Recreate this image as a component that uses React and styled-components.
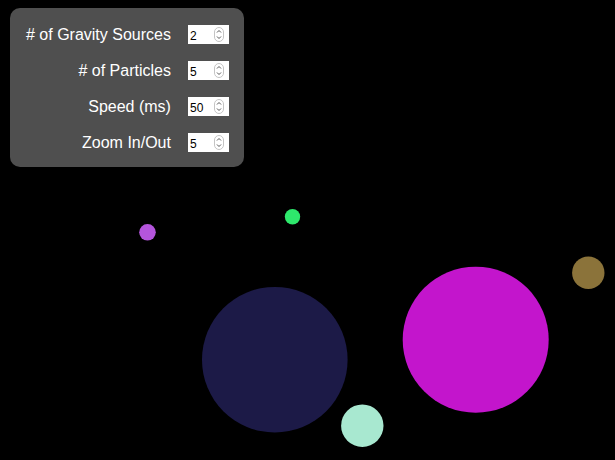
import React, { useState } from 'react';
import styled, { createGlobalStyle } from 'styled-components';

const GlobalStyle = createGlobalStyle`
  html, body {
    margin: 0;
    padding: 0;
    background: #000;
    overflow: hidden;
  }
`;

// the simulation area, black canvas filling the window
const Stage = styled.div`
  position: relative;
  width: 615px;
  height: 460px;
  background: #000;
  font-family: 'Liberation Sans', Arial, Helvetica, sans-serif;
`;

const Canvas = styled.svg`
  display: block;
  width: 100%;
  height: 100%;
`;

// control panel floats over the canvas
const Panel = styled.div`
  position: absolute;
  top: 8px;
  left: 10px;
  display: grid;
  grid-template-columns: auto 41px;
  column-gap: 17px;
  row-gap: 17px;
  align-items: center;
  padding: 17px 15px 15px 16px;
  background: #4f4f4f;
  border-radius: 10px;
`;

const Label = styled.label`
  color: #fff;
  font-size: 16px;
  text-align: right;
  white-space: nowrap;
  line-height: 19px;
`;

const NumberBox = styled.div`
  position: relative;
  width: 41px;
  height: 19px;
  background: #fff;
`;

const Input = styled.input`
  width: 100%;
  height: 100%;
  box-sizing: border-box;
  border: none;
  outline: none;
  padding: 2px 0 0 2px;
  font-family: 'Liberation Sans', Arial, sans-serif;
  font-size: 12px;
  color: #000;
  background: transparent;
  -moz-appearance: textfield;
  &::-webkit-inner-spin-button,
  &::-webkit-outer-spin-button {
    -webkit-appearance: none;
    margin: 0;
  }
`;

const Spinner = styled.svg`
  position: absolute;
  top: 2px;
  right: 5px;
  width: 10px;
  height: 15px;
  pointer-events: none;
`;

const SpinIcon = () => (
  <Spinner viewBox="0 0 10 15">
    <rect x="0.5" y="0.5" width="9" height="14" rx="4.5" fill="#fff" stroke="#c4c4c4" />
    <path d="M3 5.5 L5 3.5 L7 5.5" fill="none" stroke="#555" strokeWidth="1" />
    <path d="M3 9.5 L5 11.5 L7 9.5" fill="none" stroke="#555" strokeWidth="1" />
  </Spinner>
);

const bodies = [
  { x: 147.5, y: 232.3, r: 8.3, color: '#b455dc' },
  { x: 292.5, y: 216.7, r: 7.7, color: '#2ee86c' },
  { x: 588.3, y: 272.7, r: 16.2, color: '#8b733a' },
  { x: 274.8, y: 359.7, r: 72.8, color: '#1c1a47' },
  { x: 475.7, y: 339.7, r: 73, color: '#c315cc' },
  { x: 362.3, y: 425.7, r: 21.2, color: '#a8e8d0' },
];

const fields = [
  { id: 'sources', label: '# of Gravity Sources', value: 2 },
  { id: 'particles', label: '# of Particles', value: 5 },
  { id: 'speed', label: 'Speed (ms)', value: 50 },
  { id: 'zoom', label: 'Zoom In/Out', value: 5 },
];

const App = () => {
  const [values, setValues] = useState(
    Object.fromEntries(fields.map((f) => [f.id, f.value]))
  );

  return (
    <>
      <GlobalStyle />
      <Stage>
        <Canvas viewBox="0 0 615 460">
          {bodies.map((b, i) => (
            <circle key={i} cx={b.x} cy={b.y} r={b.r} fill={b.color} />
          ))}
        </Canvas>
        <Panel>
          {fields.map((f) => (
            <React.Fragment key={f.id}>
              <Label htmlFor={f.id}>{f.label}</Label>
              <NumberBox>
                <Input
                  id={f.id}
                  type="number"
                  value={values[f.id]}
                  onChange={(e) => setValues({ ...values, [f.id]: e.target.value })}
                />
                <SpinIcon />
              </NumberBox>
            </React.Fragment>
          ))}
        </Panel>
      </Stage>
    </>
  );
};

export default App;
